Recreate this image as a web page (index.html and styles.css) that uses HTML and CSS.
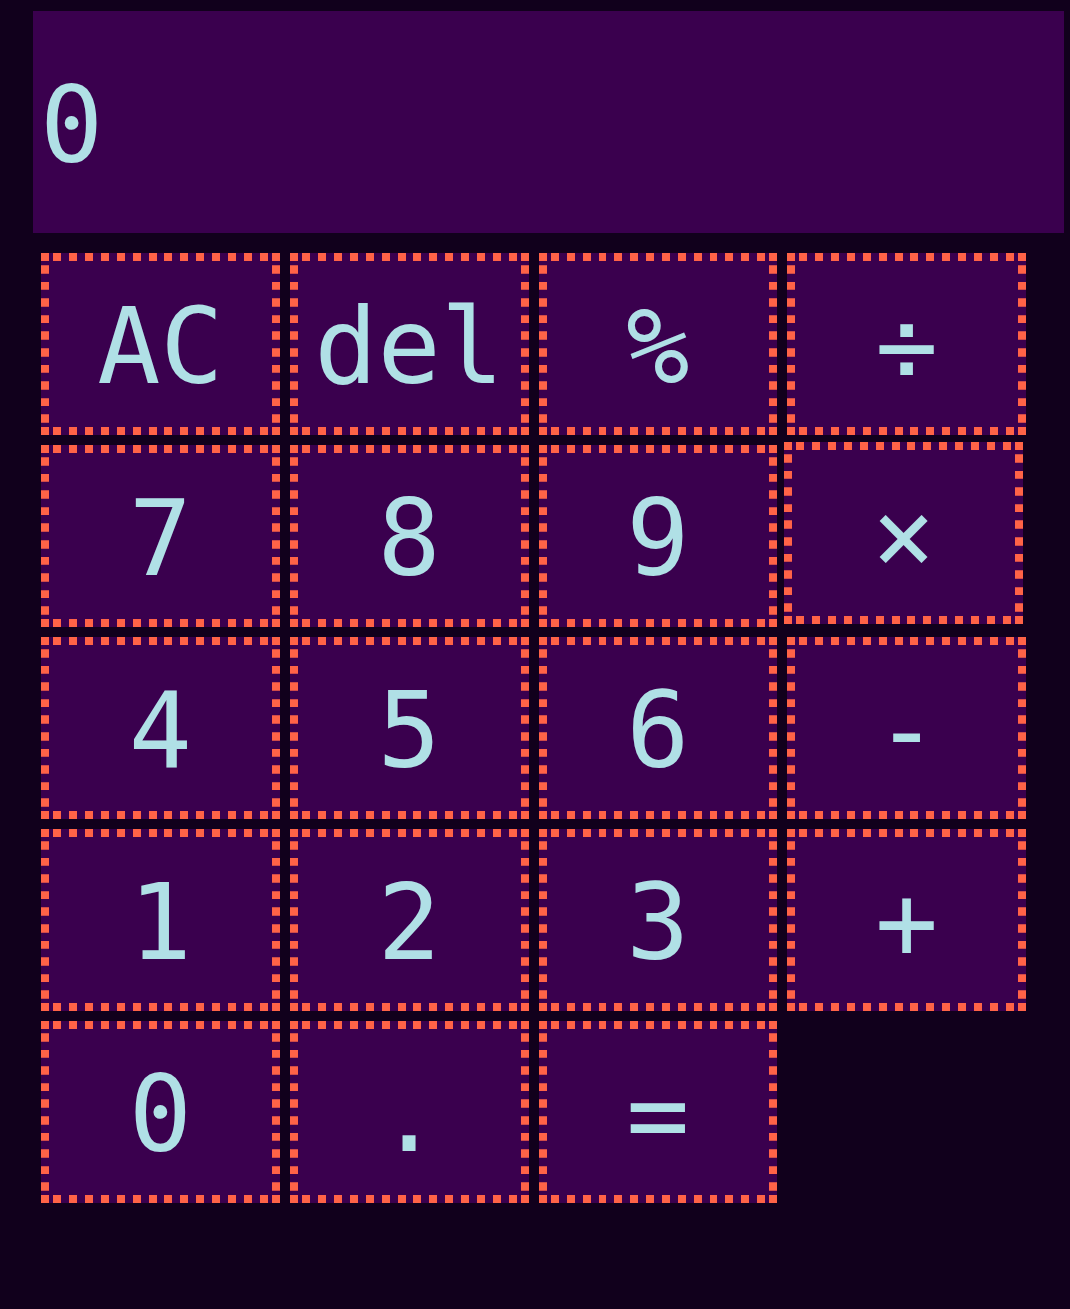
FILE: index.html
```html
<!DOCTYPE html>
<html>
<head>
<meta charset="utf-8">
<title>Calculator</title>
<link rel="stylesheet" href="styles.css">
</head>
<body>
<div class="calc">
  <div class="display">0</div>
  <div class="keys">
    <button class="key">AC</button>
    <button class="key">del</button>
    <button class="key">%</button>
    <button class="key">÷</button>
    <button class="key">7</button>
    <button class="key">8</button>
    <button class="key">9</button>
    <button class="key key-pressed">×</button>
    <button class="key">4</button>
    <button class="key">5</button>
    <button class="key">6</button>
    <button class="key">-</button>
    <button class="key">1</button>
    <button class="key">2</button>
    <button class="key">3</button>
    <button class="key">+</button>
    <button class="key">0</button>
    <button class="key">.</button>
    <button class="key">=</button>
  </div>
</div>
</body>
</html>
```
FILE: styles.css
```css
html, body {
  margin: 0;
  padding: 0;
  background: #11001c;
  height: 100%;
}
.calc {
  padding: 11px 0 0 33px;
  font-family: "DejaVu Sans Mono", monospace;
  color: #b0e0e6;
}
.display {
  width: 1031px;
  height: 222px;
  background: #3a004e;
  display: flex;
  align-items: center;
  padding-left: 7px;
  box-sizing: border-box;
  font-size: 105px;
  line-height: 1;
  padding-top: 8px;
}
.keys {
  margin: 20px 0 0 8px;
  width: 985px;
  display: grid;
  grid-template-columns: repeat(4, 1fr);
  grid-auto-rows: 182px;
  gap: 10px;
}
.key {
  margin: 0;
  padding: 6px 0 0 0;
  box-sizing: border-box;
  border: 8px solid transparent;
  border-image-source: url("data:image/svg+xml,%3Csvg xmlns='http://www.w3.org/2000/svg' width='32' height='32' viewBox='0 0 32 32'%3E%3Cg fill='%23ff6347'%3E%3Crect x='0' y='0' width='8' height='8'/%3E%3Crect x='24' y='0' width='8' height='8'/%3E%3Crect x='0' y='24' width='8' height='8'/%3E%3Crect x='24' y='24' width='8' height='8'/%3E%3Crect x='12' y='0' width='8' height='8'/%3E%3Crect x='12' y='24' width='8' height='8'/%3E%3Crect x='0' y='12' width='8' height='8'/%3E%3Crect x='24' y='12' width='8' height='8'/%3E%3C/g%3E%3C/svg%3E");
  border-image-slice: 8;
  border-image-width: 8px;
  border-image-repeat: round;
  background: #3a004e;
  color: #b0e0e6;
  font-family: "DejaVu Sans Mono", monospace;
  font-size: 105px;
  line-height: 1;
  display: flex;
  align-items: center;
  justify-content: center;
}
.key-pressed {
  transform: translate(-3px, -3px);
}
```
